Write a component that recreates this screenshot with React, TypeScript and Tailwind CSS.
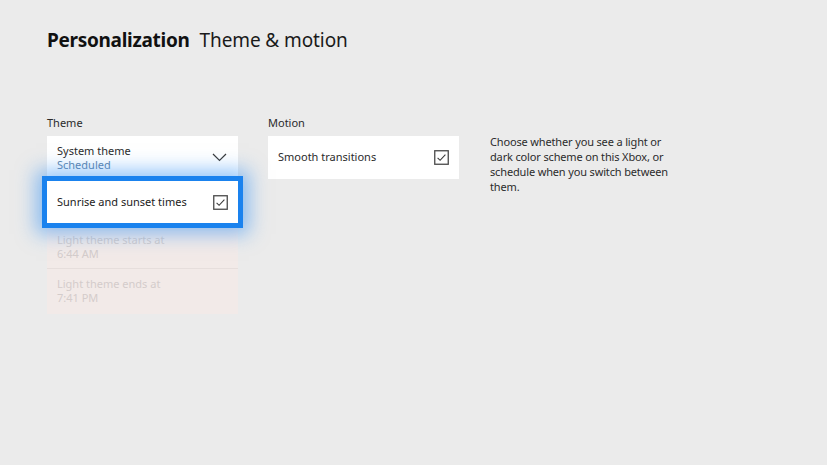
import React from "react";

const font = { fontFamily: '"Noto Sans", "Open Sans", sans-serif' };

function CheckBox() {
  return (
    <svg width="15" height="15" viewBox="0 0 15 15" className="shrink-0">
      <rect x="0.75" y="0.75" width="13.5" height="13.5" fill="none" stroke="#4a4a4a" strokeWidth="1.3" />
      <path d="M3.6 7.8 L6.1 10.3 L11.4 4.6" fill="none" stroke="#3a3a3a" strokeWidth="1.1" />
    </svg>
  );
}

export default function App() {
  return (
    <div className="w-[827px] h-[465px] bg-[#ebebeb] overflow-hidden" style={font}>
      <div className="pl-[47px] pt-[27px]">
        <h1 className="flex items-baseline text-[19px] leading-[26px] text-[#111]">
          <span className="font-bold tracking-[-0.3px]">Personalization</span>
          <span className="ml-[10px] text-[#1a1a1a] tracking-[-0.1px]">Theme &amp; motion</span>
        </h1>

        <div className="flex mt-[62px]">
          {/* Theme column */}
          <div className="w-[191px]">
            <div className="text-[11px] leading-[16px] text-[#2a2a2a] h-[21px]">Theme</div>
            <div className="bg-white h-[45px] pl-[10px] pr-[10px] flex items-center">
              <div className="flex-1 -mt-[3px]">
                <div className="text-[11px] leading-[15px] text-[#2b2b2b]">System theme</div>
                <div className="text-[11px] leading-[14px] text-[#6286ab]">Scheduled</div>
              </div>
              <svg width="15" height="9" viewBox="0 0 15 9" className="mr-[1px] -mt-[2px]">
                <path d="M1 1 L7.5 7.5 L14 1" fill="none" stroke="#3a3a3a" strokeWidth="1.2" />
              </svg>
            </div>
            <div className="relative -mx-[5px] -mt-[5px] border-[5px] border-[#1a82ee] bg-white h-[52px] pl-[10px] pr-[10px] flex items-center shadow-[0_0_18px_6px_rgba(40,140,245,0.5)] z-10">
              <div className="flex-1 text-[11px] text-[#222]">Sunrise and sunset times</div>
              <CheckBox />
            </div>
            <div className="bg-[#f2eae8]">
              <div className="h-[41px] pl-[10px] pt-[5px] border-b border-[#e6dedc]">
                <div className="text-[11px] leading-[14px] text-[#d4cccb]">Light theme starts at</div>
                <div className="text-[11px] leading-[14px] text-[#d4cccb]">6:44 AM</div>
              </div>
              <div className="h-[45px] pl-[10px] pt-[8px]">
                <div className="text-[11px] leading-[14px] text-[#d4cccb]">Light theme ends at</div>
                <div className="text-[11px] leading-[14px] text-[#d4cccb]">7:41 PM</div>
              </div>
            </div>
          </div>

          {/* Motion column */}
          <div className="w-[191px] ml-[30px]">
            <div className="text-[11px] leading-[16px] text-[#2a2a2a] h-[21px]">Motion</div>
            <div className="bg-white h-[43px] pl-[10px] pr-[10px] flex items-center">
              <div className="flex-1 text-[11px] text-[#2b2b2b]">Smooth transitions</div>
              <CheckBox />
            </div>
          </div>

          {/* Description */}
          <div className="ml-[31px] w-[185px] pt-[19px] text-[11px] leading-[15px] text-[#2b2b2b] tracking-[-0.15px]">
            Choose whether you see a light or dark color scheme on this Xbox, or schedule when you switch between them.
          </div>
        </div>
      </div>
    </div>
  );
}
